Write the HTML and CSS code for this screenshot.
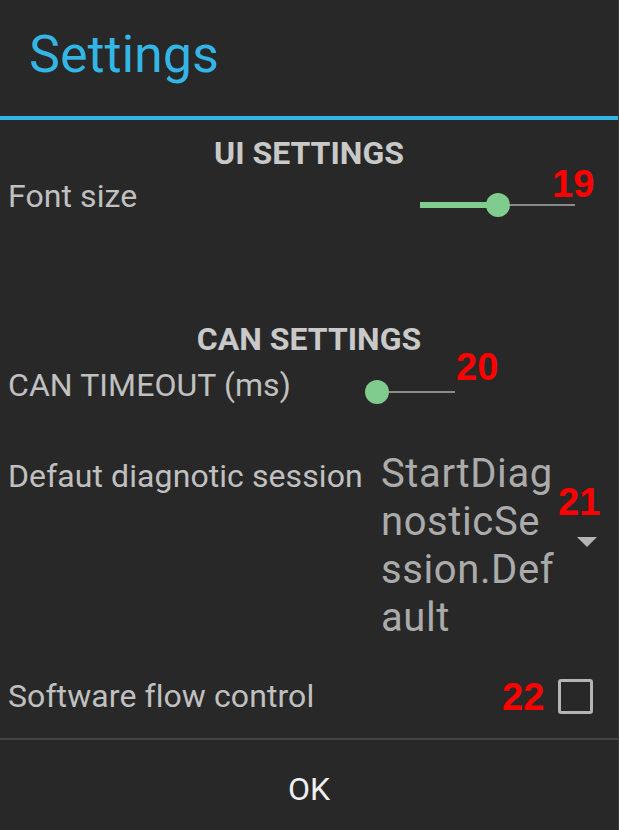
FILE: index.html
```html
<!DOCTYPE html>
<html>
<head>
<meta charset="utf-8">
<link rel="stylesheet" href="styles.css">
</head>
<body>
<div class="dialog">
  <header class="title-bar"><h1 class="title">Settings</h1></header>
  <main class="content">
    <h2 class="section">UI SETTINGS</h2>
    <div class="row row-font">
      <span class="label">Font size</span>
      <div class="slider slider-font">
        <div class="track"></div>
        <div class="fill" style="width:50%"></div>
        <div class="thumb" style="left:50%"></div>
      </div>
    </div>
    <h2 class="section section-can">CAN SETTINGS</h2>
    <div class="row row-timeout">
      <span class="label">CAN TIMEOUT (ms)</span>
      <div class="slider slider-timeout">
        <div class="track"></div>
        <div class="fill" style="width:0%"></div>
        <div class="thumb" style="left:0%"></div>
      </div>
    </div>
    <div class="row row-session">
      <span class="label">Defaut diagnotic session</span>
      <div class="spinner">
        <div class="spinner-value"><span class="seg">StartDiag</span><span class="seg">nosticSe</span><span class="seg">ssion.Def</span><span class="seg">ault</span></div>
        <div class="spinner-arrow"></div>
      </div>
    </div>
    <div class="row row-flow">
      <span class="label">Software flow control</span>
      <div class="checkbox"></div>
    </div>
  </main>
  <div class="divider"></div>
  <div class="button-bar"><span class="ok">OK</span></div>

  <span class="badge badge-19">19</span>
  <span class="badge badge-20">20</span>
  <span class="badge badge-21">21</span>
  <span class="badge badge-22">22</span>
</div>
</body>
</html>
```
FILE: styles.css
```css
html, body {
  margin: 0;
  padding: 0;
  background: #282828;
}
body {
  font-family: Roboto, "Noto Sans", "Liberation Sans", sans-serif;
}
.dialog {
  position: relative;
  width: 619px;
  height: 830px;
  box-sizing: border-box;
  border-right: 1px solid #3a3a3a;
  background: #282828;
  overflow: hidden;
}
.title-bar {
  height: 91px;
  padding: 25px 0 0 29px;
  border-bottom: 4px solid #33b5e5;
}
.title {
  margin: 0;
  font-size: 52px;
  line-height: 60px;
  font-weight: 400;
  color: #33b5e5;
}
.section {
  margin: 15px 0 0;
  text-align: center;
  font-size: 32px;
  line-height: 36px;
  font-weight: 700;
  color: #c9c9c9;
}
.section-can {
  margin-top: 104px;
}
.row {
  display: flex;
  padding-left: 8px;
}
.label {
  font-size: 32px;
  line-height: 36px;
  letter-spacing: 0.08px;
  color: #c0c0c0;
  white-space: nowrap;
}
.row-font {
  margin-top: 7px;
  height: 39px;
}
.slider {
  position: relative;
  height: 24px;
  margin-left: auto;
}
.slider-font {
  width: 155px;
  margin-top: 15px;
  margin-right: 43px;
}
.row-timeout {
  margin-top: 10px;
}
.slider-timeout {
  width: 78px;
  margin-top: 13px;
  margin-right: 163px;
}
.track {
  position: absolute;
  left: 0;
  right: 0;
  top: 11px;
  height: 2px;
  background: #8a8a8a;
}
.fill {
  position: absolute;
  left: 0;
  top: 9px;
  height: 6px;
  background: #80cc8e;
}
.thumb {
  position: absolute;
  top: 0;
  width: 24px;
  height: 24px;
  margin-left: -12px;
  border-radius: 50%;
  background: #80cc8e;
}
.row-session {
  margin-top: 46px;
  align-items: baseline;
}
.spinner {
  display: flex;
  margin-left: auto;
  margin-right: 21px;
}
.spinner-value {
  width: 196px;
  font-size: 40px;
  line-height: 48px;
  letter-spacing: 0.6px;
  color: #ababab;
}
.seg {
  display: block;
}
.spinner-arrow {
  align-self: center;
  margin-bottom: 8px;
  width: 0;
  height: 0;
  border-left: 10px solid transparent;
  border-right: 10px solid transparent;
  border-top: 10px solid #b4b4b4;
}
.row-flow {
  margin-top: 36px;
  align-items: center;
}
.checkbox {
  margin-left: auto;
  margin-right: 25px;
  width: 35px;
  height: 35px;
  box-sizing: border-box;
  border: 3px solid #b4b4b4;
  border-radius: 3px;
}
.divider {
  margin-top: 24px;
  height: 2px;
  background: #454545;
}
.button-bar {
  padding-top: 29px;
  text-align: center;
}
.ok {
  font-size: 32px;
  line-height: 40px;
  color: #f0f0f0;
}
.badge {
  position: absolute;
  font-family: "Liberation Sans", Arial, sans-serif;
  font-weight: 700;
  font-size: 38px;
  line-height: 38px;
  color: #ff0000;
}
.badge-19 { left: 552px; top: 165px; }
.badge-20 { left: 456px; top: 348px; }
.badge-21 { left: 558px; top: 483px; }
.badge-22 { left: 502px; top: 678px; }
```
